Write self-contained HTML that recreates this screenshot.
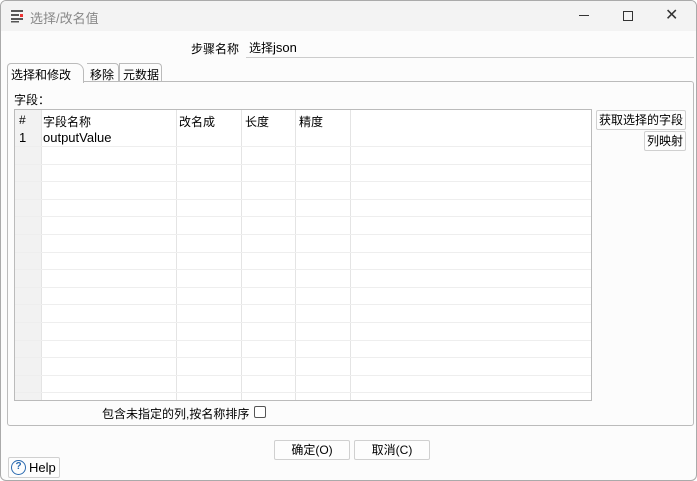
<!DOCTYPE html>
<html><head><meta charset="utf-8"><style>
*{box-sizing:border-box}
body{margin:0;width:697px;height:481px;background:#fff;font-family:"Liberation Sans","Noto Sans CJK SC",sans-serif;font-size:12px;color:#000;position:relative;overflow:hidden}
.win{position:absolute;left:0;top:0;width:697px;height:481px;border:1px solid #aaa;border-radius:6px;background:#fcfcfc;overflow:hidden}
.title{position:absolute;left:0;top:0;width:100%;height:30px;background:#f3f3f3}
.a{position:absolute;white-space:nowrap}
.btn{position:absolute;border:1px solid #d0d0d0;background:#fdfdfd;text-align:center;line-height:18px;border-radius:2px;white-space:nowrap}
.hl{position:absolute;height:1px;background:#eee;left:0;right:0}
.vl{position:absolute;width:1px;background:#e4e4e4;top:0;bottom:0}
.l{font-size:13px}
</style></head><body><div class="win">
<div class="title">
<svg class="a" style="left:9px;top:8px" width="14" height="14"><rect x="1" y="1" width="12" height="2" fill="#555"/><rect x="1" y="5" width="8" height="2" fill="#555"/><rect x="1" y="9" width="12" height="2" fill="#555"/><rect x="1" y="12" width="8" height="1.5" fill="#555"/><rect x="10" y="5" width="3" height="3" fill="#e33"/></svg>
<div class="a" style="left:29px;top:7px;color:#888;font-size:13px">选择/改名值</div>
<div class="a" style="left:578px;top:14px;width:10px;height:1px;background:#333"></div>
<div class="a" style="left:622px;top:10px;width:10px;height:10px;border:1px solid #333"></div>
<div class="a" style="left:664px;top:4px;font-size:16px;color:#333">✕</div>
</div>
<div class="a" style="left:190px;top:39px">步骤名称</div>
<div class="a" style="left:245px;top:36px;width:448px;height:21px;border-bottom:1px solid #ccc;padding:2px 3px">选择<span class="l">json</span></div>
<div class="a" style="left:6px;top:80px;width:687px;height:345px;border:1px solid #bbb;border-radius:3px"></div>
<div class="a" style="left:6px;top:62px;width:77px;height:20px;border:1px solid #bbb;border-bottom:none;border-radius:4px 8px 0 0;background:#fcfcfc;padding:2px 3px">选择和修改</div>
<div class="a" style="left:86px;top:62px;width:32px;height:19px;border:1px solid #bbb;border-bottom:none;border-left:none;border-radius:0 4px 0 0;padding:2px 3px">移除</div>
<div class="a" style="left:118px;top:62px;width:43px;height:19px;border:1px solid #bbb;border-bottom:none;border-radius:0 4px 0 0;padding:2px 3px">元数据</div>
<div class="a" style="left:13px;top:90px">字段：</div>
<div class="a" style="left:13px;top:108px;width:578px;height:292px;border:1px solid #bbb;background:#fff;overflow:hidden">
<div class="a" style="left:0;top:0;width:26px;height:292px;background:#f2f2f2"></div>
<div class="vl" style="left:26px"></div><div class="vl" style="left:161px"></div><div class="vl" style="left:226px"></div><div class="vl" style="left:280px"></div><div class="vl" style="left:335px"></div>
<div class="hl" style="top:36px"></div><div class="hl" style="top:54px"></div><div class="hl" style="top:71px"></div><div class="hl" style="top:89px"></div><div class="hl" style="top:106px"></div><div class="hl" style="top:124px"></div><div class="hl" style="top:142px"></div><div class="hl" style="top:159px"></div><div class="hl" style="top:177px"></div><div class="hl" style="top:194px"></div><div class="hl" style="top:212px"></div><div class="hl" style="top:230px"></div><div class="hl" style="top:247px"></div><div class="hl" style="top:265px"></div><div class="hl" style="top:282px"></div>
<div class="a" style="left:4px;top:3px">#</div><div class="a" style="left:28px;top:3px">字段名称</div><div class="a" style="left:164px;top:3px">改名成</div><div class="a" style="left:230px;top:3px">长度</div><div class="a" style="left:284px;top:3px">精度</div>
<div class="a l" style="left:4px;top:20px">1</div><div class="a l" style="left:28px;top:20px">outputValue</div>
</div>
<div class="btn" style="left:595px;top:109px;width:90px;height:20px">获取选择的字段</div>
<div class="btn" style="left:643px;top:130px;width:42px;height:20px">列映射</div>
<div class="a" style="left:101px;top:404px">包含未指定的列,按名称排序</div>
<div class="a" style="left:253px;top:405px;width:12px;height:12px;border:1px solid #555;border-radius:2px;background:#fff"></div>
<div class="btn" style="left:273px;top:439px;width:76px;height:20px">确定(O)</div>
<div class="btn" style="left:353px;top:439px;width:76px;height:20px">取消(C)</div>
<div class="btn l" style="left:7px;top:456px;width:52px;height:21px;line-height:19px;padding-left:20px;text-align:left">Help</div>
<div class="a" style="left:10px;top:459px;width:15px;height:15px;border:1.5px solid #2a6ab0;border-radius:50%;color:#2a6ab0;font-size:10px;text-align:center;line-height:12px;font-weight:bold">?</div>
</div></body></html>
